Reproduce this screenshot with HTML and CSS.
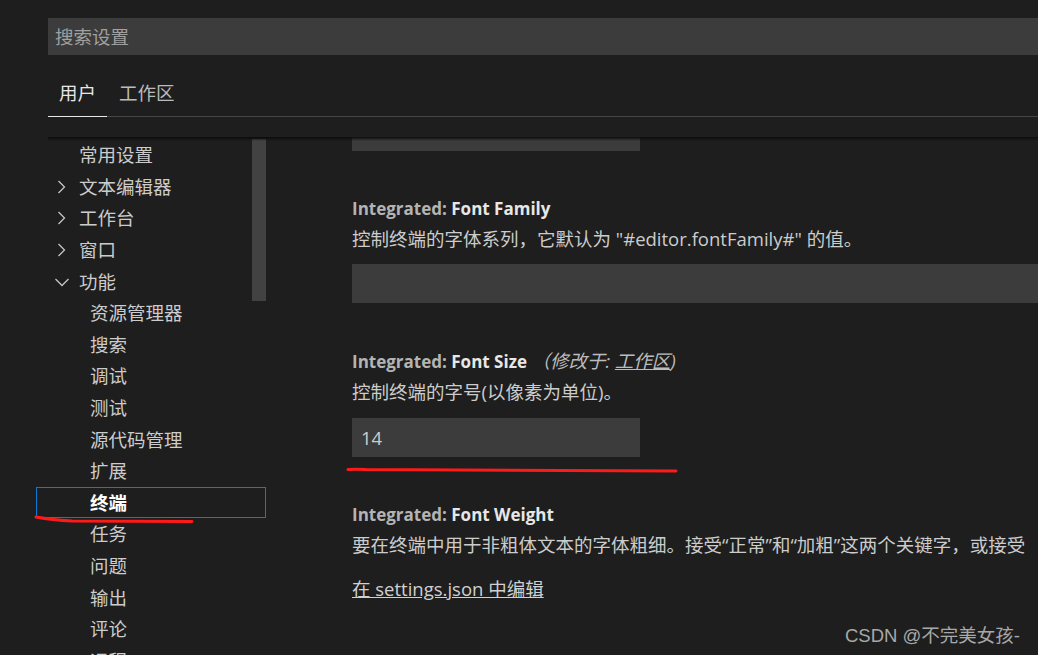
FILE: index.html
```html
<!DOCTYPE html>
<html lang="zh-CN">
<head>
    <meta charset="UTF-8">
    <meta name="viewport" content="width=device-width, initial-scale=1.0">
    <title>设置</title>
    <link rel="stylesheet" href="styles.css">
</head>
<body>

    <!-- Header: search + scope tabs -->
    <div class="header">
        <div class="search-box">搜索设置</div>
        <div class="tabs">
            <span class="tab tab-active">用户</span>
            <span class="tab">工作区</span>
        </div>
    </div>

    <!-- Body: table of contents + settings list -->
    <div class="body">
        <div class="toc">
            <div class="toc-row">常用设置</div>
            <div class="toc-row">
                <svg class="chev" width="10" height="14" viewBox="0 0 10 14"><polyline points="1.5,1 7.5,7 1.5,13" /></svg>文本编辑器
            </div>
            <div class="toc-row">
                <svg class="chev" width="10" height="14" viewBox="0 0 10 14"><polyline points="1.5,1 7.5,7 1.5,13" /></svg>工作台
            </div>
            <div class="toc-row">
                <svg class="chev" width="10" height="14" viewBox="0 0 10 14"><polyline points="1.5,1 7.5,7 1.5,13" /></svg>窗口
            </div>
            <div class="toc-row">
                <svg class="chev chev-open" width="16" height="10" viewBox="0 0 16 10"><polyline points="1.5,2 8,8.5 14.5,2" /></svg>功能
            </div>
            <div class="toc-row toc-child">资源管理器</div>
            <div class="toc-row toc-child">搜索</div>
            <div class="toc-row toc-child">调试</div>
            <div class="toc-row toc-child">测试</div>
            <div class="toc-row toc-child">源代码管理</div>
            <div class="toc-row toc-child">扩展</div>
            <div class="toc-row toc-child toc-focused">终端</div>
            <div class="toc-row toc-child">任务</div>
            <div class="toc-row toc-child">问题</div>
            <div class="toc-row toc-child">输出</div>
            <div class="toc-row toc-child">评论</div>
            <div class="toc-row toc-child">远程</div>
            <div class="toc-scrollbar"></div>
        </div>

        <div class="settings">
            <div class="input input-short input-cut"></div>

            <div class="setting">
                <div class="setting-title"><span class="cat">Integrated:</span> Font Family</div>
                <div class="setting-desc">控制终端的字体系列，它默认为 "#editor.fontFamily#" 的值。</div>
                <div class="input input-wide"></div>
            </div>

            <div class="setting">
                <div class="setting-title"><span class="cat">Integrated:</span> Font Size <span class="modified">（修改于: <u>工作区</u>)</span></div>
                <div class="setting-desc">控制终端的字号(以像素为单位)。</div>
                <div class="input input-short input-size">14</div>
            </div>

            <div class="setting">
                <div class="setting-title"><span class="cat">Integrated:</span> Font Weight</div>
                <div class="setting-desc">要在终端中用于非粗体文本的字体粗细。接受“正常”和“加粗”这两个关键字，或接受</div>
                <div class="edit-link">在 settings.json 中编辑</div>
            </div>
        </div>
    </div>

    <!-- Hand-drawn red marks over the screenshot -->
    <svg class="marks" width="1038" height="655" viewBox="0 0 1038 655">
        <path d="M36 517 Q 52 520 72 521 L 192 521.5" />
        <path d="M348 469.5 Q 356 468.8 366 469.6 L 676 471" />
    </svg>

    <div class="watermark">CSDN @不完美女孩-</div>

</body>
</html>
```

FILE: styles.css
```css
body {
    margin: 0;
    background-color: #1e1e1e;
    color: #cccccc;
    font-family: "Open Sans", "Noto Sans CJK SC", sans-serif;
    font-size: 18.5px;
    width: 1038px;
    height: 655px;
    overflow: hidden;
    position: relative;
}
.header {
    padding: 18px 0 0 48px;
}
.search-box {
    height: 37px;
    line-height: 37px;
    padding-left: 7px;
    background-color: #3c3c3c;
    color: #a0a0a0;
}
.tabs {
    display: flex;
    margin-top: 20px;
    border-bottom: 1px solid #454545;
}
.tab {
    height: 41px;
    line-height: 36px;
    padding: 0 11px;
    color: #bbbbbb;
    margin-bottom: -1px;
}
.tab + .tab {
    padding-left: 12px;
}
.tab-active {
    color: #e7e7e7;
    border-bottom: 1px solid #e7e7e7;
}
.body {
    position: relative;
    display: flex;
    margin: 20px 0 0 36px;
    height: 518px;
    overflow: hidden;
}
/* scroll shadow under the header, starts where the search box starts */
.body::before {
    content: "";
    position: absolute;
    top: 0;
    left: 12px;
    right: 0;
    height: 4px;
    background: linear-gradient(#0c0c0c, rgba(30, 30, 30, 0));
    z-index: 2;
}
.toc {
    position: relative;
    flex: none;
    width: 230px;
    padding-top: 2.2px;
}
.toc-row {
    height: 31.6px;
    line-height: 31.6px;
    padding-left: 43px;
    position: relative;
    color: #cccccc;
    box-sizing: border-box;
}
.toc-child {
    padding-left: 54px;
}
.toc-focused {
    border: 1px solid #0a7ad6;
    line-height: 29.6px;
    padding-left: 53px;
    font-weight: bold;
    color: #ffffff;
}
.chev {
    position: absolute;
    left: 21px;
    top: 9px;
}
.chev polyline {
    fill: none;
    stroke: #c5c5c5;
    stroke-width: 1.3;
}
.chev-open {
    left: 18px;
    top: 11px;
}
.toc-scrollbar {
    position: absolute;
    top: 2px;
    right: 0;
    width: 14px;
    height: 162px;
    background-color: #424242;
}
.settings {
    flex: 1;
    padding-left: 86px;
    white-space: nowrap;
}
.input {
    height: 39px;
    line-height: 39px;
    background-color: #3c3c3c;
    color: #cccccc;
    box-sizing: border-box;
    padding-left: 9px;
}
.input-short {
    width: 288px;
}
.input-cut {
    height: 14px;
}
.setting {
    padding-top: 43px;
}
.setting-title {
    line-height: 30px;
    font-size: 17px;
    font-weight: 700;
    color: #e7e7e7;
}
.cat {
    color: #b4b4b4;
}
.modified {
    font-size: 18.5px;
    font-weight: normal;
    font-style: italic;
    color: #bbbbbb;
}
.setting-desc {
    line-height: 30px;
    color: #cccccc;
}
.setting-desc + .input {
    margin-top: 10px;
}
.setting-desc + .input-size {
    margin-top: 11px;
}
.edit-link {
    margin-top: 14px;
    line-height: 30px;
    text-decoration: underline;
    color: #d0d0d0;
}
.marks {
    position: absolute;
    left: 0;
    top: 0;
    pointer-events: none;
}
.marks path {
    fill: none;
    stroke: #ff1a1a;
    stroke-width: 3;
    stroke-linecap: round;
}
.watermark {
    position: absolute;
    right: 18px;
    bottom: 8px;
    font-family: "Liberation Sans", "Noto Sans CJK SC", sans-serif;
    font-size: 18.5px;
    color: #a8a8a8;
}
```
